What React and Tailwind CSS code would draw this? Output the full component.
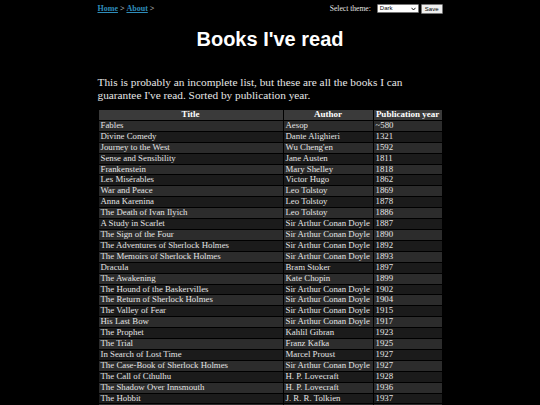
import React from 'react';

const books = [
  ['Fables', 'Aesop', '~580'],
  ['Divine Comedy', 'Dante Alighieri', '1321'],
  ['Journey to the West', "Wu Cheng'en", '1592'],
  ['Sense and Sensibility', 'Jane Austen', '1811'],
  ['Frankenstein', 'Mary Shelley', '1818'],
  ['Les Misérables', 'Victor Hugo', '1862'],
  ['War and Peace', 'Leo Tolstoy', '1869'],
  ['Anna Karenina', 'Leo Tolstoy', '1878'],
  ['The Death of Ivan Ilyich', 'Leo Tolstoy', '1886'],
  ['A Study in Scarlet', 'Sir Arthur Conan Doyle', '1887'],
  ['The Sign of the Four', 'Sir Arthur Conan Doyle', '1890'],
  ['The Adventures of Sherlock Holmes', 'Sir Arthur Conan Doyle', '1892'],
  ['The Memoirs of Sherlock Holmes', 'Sir Arthur Conan Doyle', '1893'],
  ['Dracula', 'Bram Stoker', '1897'],
  ['The Awakening', 'Kate Chopin', '1899'],
  ['The Hound of the Baskervilles', 'Sir Arthur Conan Doyle', '1902'],
  ['The Return of Sherlock Holmes', 'Sir Arthur Conan Doyle', '1904'],
  ['The Valley of Fear', 'Sir Arthur Conan Doyle', '1915'],
  ['His Last Bow', 'Sir Arthur Conan Doyle', '1917'],
  ['The Prophet', 'Kahlil Gibran', '1923'],
  ['The Trial', 'Franz Kafka', '1925'],
  ['In Search of Lost Time', 'Marcel Proust', '1927'],
  ['The Case-Book of Sherlock Holmes', 'Sir Arthur Conan Doyle', '1927'],
  ['The Call of Cthulhu', 'H. P. Lovecraft', '1928'],
  ['The Shadow Over Innsmouth', 'H. P. Lovecraft', '1936'],
  ['The Hobbit', 'J. R. R. Tolkien', '1937'],
  ['Of Mice and Men', 'John Steinbeck', '1937'],
  ['Nineteen Eighty-Four', 'George Orwell', '1949'],
];

export default function App() {
  return (
    <div className="min-h-screen bg-black text-[#e4e4e4] font-['Liberation_Serif',serif]">
      <div className="w-[345px] mx-auto">
        {/* top bar */}
        <div className="flex items-center justify-between h-[18px] text-[8px]">
          <div className="flex items-center gap-[2px]">
            <a href="#" className="text-[#2f8dbb] font-bold underline">Home</a>
            <span>&gt;</span>
            <a href="#" className="text-[#2f8dbb] font-bold underline">About</a>
            <span>&gt;</span>
          </div>
          <div className="flex items-center">
            <span className="text-[7.6px]">Select theme:</span>
            <div className="relative ml-[6px] w-[42px] h-[9px] bg-white border border-[#767676] rounded-[1px] text-black text-[6px] font-['Liberation_Sans',sans-serif] leading-[7px] pl-[2px]">
              Dark
              <svg className="absolute right-[2px] top-[2px]" width="5" height="4" viewBox="0 0 5 4">
                <path d="M0.5 0.8 L2.5 3 L4.5 0.8" stroke="#000" strokeWidth="0.9" fill="none" />
              </svg>
            </div>
            <div className="ml-[2px] h-[10px] px-[3px] bg-[#efefef] border border-[#767676] rounded-[1px] text-black text-[6px] font-['Liberation_Sans',sans-serif] leading-[8px]">
              Save
            </div>
          </div>
        </div>

        <h1 className="text-center font-['Liberation_Sans',sans-serif] font-bold text-white text-[20px] leading-[24px] mt-[9px]">
          Books I've read
        </h1>

        <p className="mt-[25px] text-[11.3px] leading-[12.5px] text-[#e6e6e6]">
          This is probably an incomplete list, but these are all the books I can guarantee I've read. Sorted by publication year.
        </p>

        <table className="mt-[8px] w-full border-separate border-spacing-[1px] text-[8.8px] leading-[9.9px]">
          <thead>
            <tr className="bg-[#3a3a3a] text-white font-bold text-[9px]">
              <th className="w-[184px] text-center font-bold">Title</th>
              <th className="w-[89px] text-center font-bold">Author</th>
              <th className="text-center font-bold whitespace-nowrap px-[1px]">Publication year</th>
            </tr>
          </thead>
          <tbody>
            {books.map((b, i) => (
              <tr key={i} className={i % 2 === 0 ? 'bg-[#2c2c2c]' : 'bg-[#1b1b1b]'}>
                <td className="px-[2px] whitespace-nowrap">{b[0]}</td>
                <td className="px-[2px] whitespace-nowrap">{b[1]}</td>
                <td className="px-[2px] whitespace-nowrap">{b[2]}</td>
              </tr>
            ))}
          </tbody>
        </table>
      </div>
    </div>
  );
}
